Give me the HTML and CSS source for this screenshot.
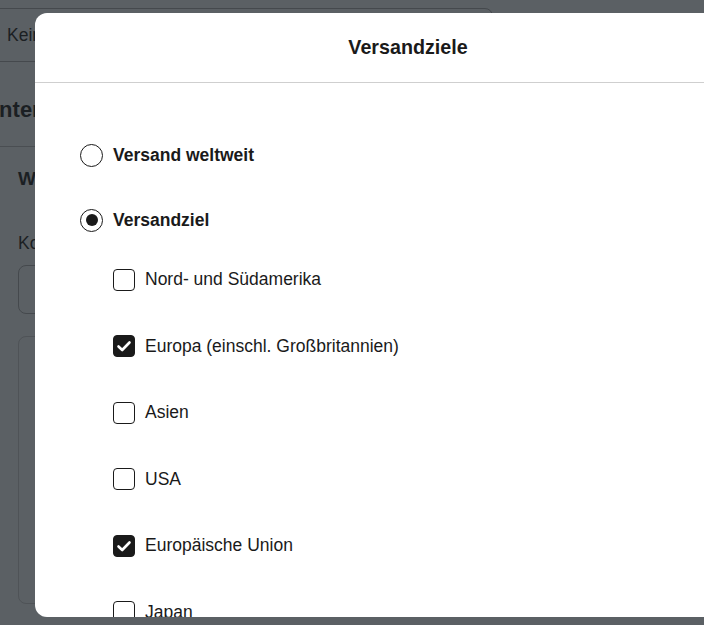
FILE: index.html
```html
<!DOCTYPE html>
<html lang="de">
<head>
<meta charset="utf-8">
<title>Versandziele</title>
<link rel="stylesheet" href="styles.css">
</head>
<body>
<div class="page">
  <div class="topbox"><span>Keine Einschränkungen</span></div>
  <h2 class="section-title"><span class="section-title-text">Internationaler Versand</span></h2>
  <div class="section">
    <h3 class="sub">Weltweit</h3>
    <span class="field-label">Kostenpflichtig</span>
    <div class="input"></div>
    <div class="card"></div>
  </div>
</div>

<div class="modal">
  <div class="modal-header"><h1 class="modal-title">Versandziele</h1></div>
  <div class="modal-body">
    <div class="radios">
      <div class="radio-row"><span class="radio"></span><span class="radio-label">Versand weltweit</span></div>
      <div class="radio-row"><span class="radio checked"></span><span class="radio-label">Versandziel</span></div>
    </div>
    <div class="checks">
      <div class="check-row"><span class="box"></span><span class="check-label">Nord- und Südamerika</span></div>
      <div class="check-row"><span class="box checked"><svg viewBox="0 0 22 22" width="22" height="22"><path d="M5.5 11.5 L9.2 15 L16.5 7.5" fill="none" stroke="#fff" stroke-width="2.6" stroke-linecap="round" stroke-linejoin="round"/></svg></span><span class="check-label">Europa (einschl. Großbritannien)</span></div>
      <div class="check-row"><span class="box"></span><span class="check-label">Asien</span></div>
      <div class="check-row"><span class="box"></span><span class="check-label">USA</span></div>
      <div class="check-row"><span class="box checked"><svg viewBox="0 0 22 22" width="22" height="22"><path d="M5.5 11.5 L9.2 15 L16.5 7.5" fill="none" stroke="#fff" stroke-width="2.6" stroke-linecap="round" stroke-linejoin="round"/></svg></span><span class="check-label">Europäische Union</span></div>
      <div class="check-row"><span class="box"></span><span class="check-label">Japan</span></div>
    </div>
  </div>
</div>
</body>
</html>
```

FILE: styles.css
```css
html, body {
  margin: 0;
  padding: 0;
}
body {
  width: 704px;
  height: 625px;
  overflow: hidden;
  background: #5b6064;
  font-family: "Liberation Sans", Arial, sans-serif;
  color: #1b1f23;
  position: relative;
}

/* dimmed page underneath */
.page {
  padding-top: 8px;
}
.topbox {
  box-sizing: border-box;
  width: 513px;
  height: 54px;
  margin-left: -20px;
  border: 1px solid #45494d;
  border-radius: 8px;
  display: flex;
  align-items: center;
  padding-left: 26px;
  font-size: 17.5px;
}
.section-title {
  box-sizing: border-box;
  margin: 0;
  height: 85px;
  padding-top: 12px;
  display: flex;
  align-items: center;
  border-bottom: 1px solid #4a4e52;
  font-size: 22px;
  font-weight: bold;
}
.section-title-text {
  margin-left: -7px;
  white-space: nowrap;
}
.section {
  padding-left: 18px;
}
.sub {
  margin: 0;
  padding-top: 20px;
  line-height: 24px;
  font-size: 19px;
  font-weight: bold;
}
.field-label {
  display: block;
  margin-top: 40px;
  line-height: 24px;
  font-size: 17.5px;
}
.input {
  box-sizing: border-box;
  margin-top: 10px;
  width: 600px;
  height: 49px;
  border: 1px solid #45494d;
  border-radius: 8px;
}
.card {
  box-sizing: border-box;
  margin-top: 22px;
  width: 600px;
  height: 268px;
  border: 1px solid #4f5357;
  border-radius: 8px;
}

/* modal */
.modal {
  position: absolute;
  left: 35px;
  top: 13px;
  width: 746px;
  height: 604px;
  background: #fff;
  border-radius: 12px;
  overflow: hidden;
  color: #1a1a1a;
}
.modal-header {
  box-sizing: border-box;
  height: 70px;
  border-bottom: 1px solid #cfcfcf;
  display: flex;
  align-items: center;
  justify-content: center;
  padding-bottom: 1px;
}
.modal-title {
  margin: 0;
  font-size: 19.7px;
  font-weight: bold;
}
.modal-body {
  padding: 60px 0 0 45px;
}
.radios {
  display: flex;
  flex-direction: column;
  gap: 41px;
}
.radio-row, .check-row {
  display: flex;
  align-items: center;
  height: 24px;
}
.radio {
  box-sizing: border-box;
  width: 23px;
  height: 23px;
  border: 1.6px solid #1a1a1a;
  border-radius: 50%;
  display: flex;
  align-items: center;
  justify-content: center;
  margin-right: 10px;
}
.radio.checked::after {
  content: "";
  width: 12px;
  height: 12px;
  border-radius: 50%;
  background: #1a1a1a;
}
.radio-label {
  font-size: 17.5px;
  font-weight: bold;
}
.checks {
  margin: 35.5px 0 0 33px;
  display: flex;
  flex-direction: column;
  gap: 42.6px;
}
.box {
  box-sizing: border-box;
  width: 22px;
  height: 22px;
  border: 1.3px solid #1a1a1a;
  border-radius: 4px;
  margin-right: 10px;
  display: flex;
}
.box.checked {
  background: #1a1a1a;
  border-color: #1a1a1a;
}
.box svg {
  display: block;
  margin: -1.3px;
}
.check-label {
  font-size: 17.5px;
}
```
